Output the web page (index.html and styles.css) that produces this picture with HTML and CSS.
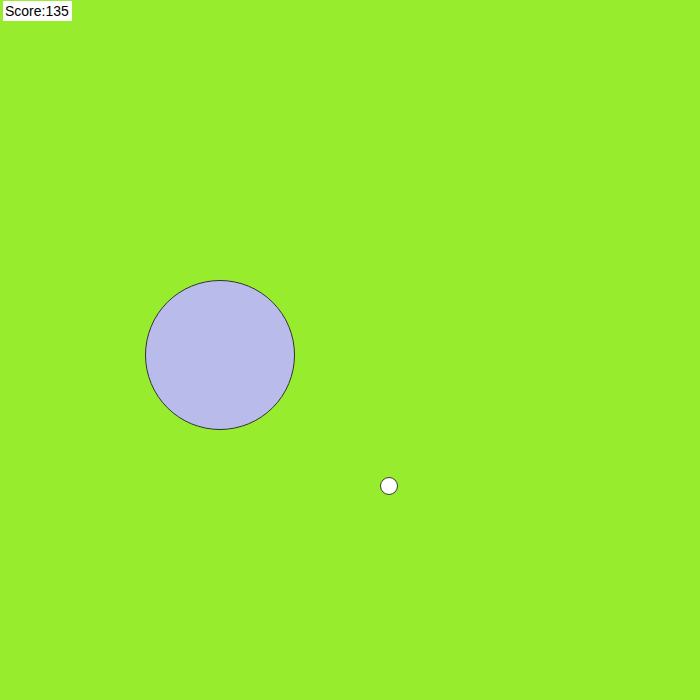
FILE: index.html
```html
<!DOCTYPE html>
<html>
<head>
<meta charset="utf-8">
<link rel="stylesheet" href="styles.css">
</head>
<body>
<div class="field">
  <div class="score">Score:135</div>
  <div class="blob"></div>
  <div class="ball"></div>
</div>
</body>
</html>
```
FILE: styles.css
```css
html, body {
  margin: 0;
  padding: 0;
}
.field {
  position: relative;
  width: 700px;
  height: 700px;
  background: #97ec2e;
  overflow: hidden;
}
.score {
  position: absolute;
  left: 3px;
  top: 1px;
  height: 20px;
  box-sizing: border-box;
  padding: 2px 3px 0 2px;
  background: #ffffff;
  font-family: "Liberation Sans", Arial, sans-serif;
  font-size: 14px;
  line-height: 17px;
  color: #000;
}
.blob {
  position: absolute;
  left: 145px;
  top: 280px;
  width: 150px;
  height: 150px;
  box-sizing: border-box;
  border-radius: 50%;
  border: 1px solid #333;
  background: #b9bbea;
}
.ball {
  position: absolute;
  left: 380px;
  top: 477px;
  width: 18px;
  height: 18px;
  box-sizing: border-box;
  border-radius: 50%;
  border: 1px solid #3a3a3a;
  background: #ffffff;
}
```
